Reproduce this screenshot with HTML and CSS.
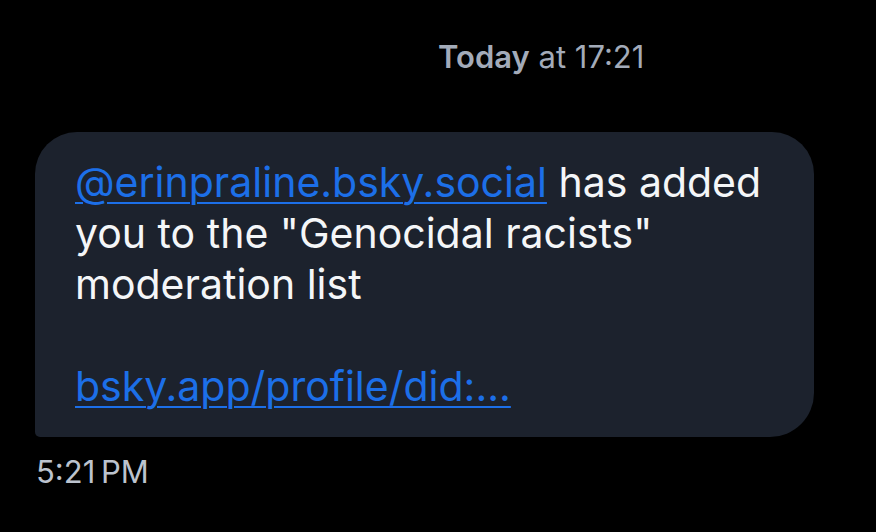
FILE: index.html
```html
<!DOCTYPE html>
<html>
<head>
<meta charset="utf-8">
<link rel="stylesheet" href="styles.css">
</head>
<body>
<div class="thread">
  <div class="day"><b>Today</b> at 17:21</div>
  <div class="bubble">
    <p class="msg"><a class="link">@erinpraline.bsky.social</a> has added you to the "Genocidal racists" moderation list</p>
    <p class="msg gap"><a class="link">bsky.app/profile/did:...</a></p>
  </div>
  <div class="time">5:21&#8239;PM</div>
</div>
</body>
</html>
```
FILE: styles.css
```css
html, body {
  margin: 0;
  padding: 0;
  background: #000;
  width: 876px;
  height: 532px;
  overflow: hidden;
}
.thread {
  font-family: Inter, "Noto Sans", sans-serif;
  display: flex;
  flex-direction: column;
  padding-top: 37px;
}
.day {
  color: #a3abb9;
  font-size: 31px;
  line-height: 40px;
  padding-left: 438px;
}
.day b {
  font-weight: 600;
}
.bubble {
  margin: 55px 0 0 35px;
  width: 779px;
  height: 305px;
  box-sizing: border-box;
  background: #1c222d;
  border-radius: 42px 42px 44px 5px;
  padding: 25px 40px 0 40px;
}
.msg {
  margin: 0;
  color: #f4f6f8;
  font-size: 41px;
  line-height: 51px;
}
.msg.gap {
  margin-top: 51px;
}
.link {
  color: #1c6fe8;
  text-decoration: underline;
  text-decoration-thickness: 2px;
  text-underline-offset: 5px;
}
.time {
  color: #bcc3ce;
  font-size: 31px;
  line-height: 40px;
  padding: 15px 0 0 36px;
}
```
